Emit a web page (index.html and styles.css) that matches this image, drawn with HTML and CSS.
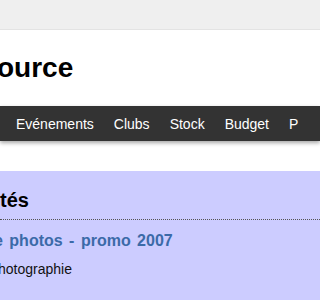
FILE: index.html
```html
<!DOCTYPE html>
<html lang="fr">
<head>
<meta charset="utf-8">
<title>ource</title>
<link rel="stylesheet" href="styles.css">
</head>
<body>
<div class="topbar"></div>
<header class="header">
  <h1 class="title">ource</h1>
</header>
<nav class="nav">
  <ul class="menu">
    <li><a href="#">Evénements</a></li>
    <li><a href="#">Clubs</a></li>
    <li><a href="#">Stock</a></li>
    <li><a href="#">Budget</a></li>
    <li><a href="#">P</a></li>
  </ul>
</nav>
<section class="box">
  <h2 class="box-title">tés</h2>
  <a class="news-link" href="#">e photos - promo 2007</a>
  <p class="news-cat">hotographie</p>
</section>
</body>
</html>
```
FILE: styles.css
```css
html, body {
  margin: 0;
  padding: 0;
  background: #ffffff;
  font-family: "Liberation Sans", Arial, sans-serif;
  overflow: hidden;
}
.topbar {
  height: 29px;
  background: #efefef;
  border-bottom: 1px solid #e3e3e3;
}
.header {
  height: 76px;
  box-sizing: border-box;
  padding-top: 22px;
  overflow: hidden;
}
.title {
  margin: 0 0 0 -3px;
  font-size: 28px;
  font-weight: bold;
  line-height: 32px;
  color: #000;
  white-space: nowrap;
}
.nav {
  height: 35px;
  background: #333333;
  box-shadow: 0 2px 4px rgba(0, 0, 0, 0.35);
  position: relative;
  overflow: visible;
}
.menu {
  list-style: none;
  margin: 0;
  padding: 2px 0 0 6px;
  display: flex;
  white-space: nowrap;
  overflow: hidden;
  height: 33px;
}
.menu a {
  display: block;
  padding: 0 10px;
  font-size: 14px;
  line-height: 33px;
  color: #ffffff;
  text-decoration: none;
}
.box {
  margin-top: 30px;
  background: #ccccff;
  padding: 18px 0 40px 0;
  overflow: hidden;
}
.box-title {
  margin: 0;
  font-size: 20px;
  font-weight: bold;
  line-height: 23px;
  color: #000;
  padding-bottom: 7px;
  border-bottom: 1px dotted #555;
}
.news-link {
  display: block;
  margin: 12px 0 0 -6px;
  font-size: 16px;
  font-weight: bold;
  line-height: 18px;
  color: #3b6aa8;
  text-decoration: none;
  white-space: nowrap;
  word-spacing: 2px;
}
.news-cat {
  margin: 11px 0 0 -2px;
  font-size: 14px;
  line-height: 16px;
  color: #111;
}
```
